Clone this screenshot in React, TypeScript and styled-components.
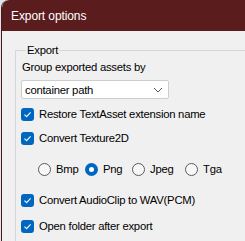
import styled, { createGlobalStyle } from "styled-components";
import { useState } from "react";

const Global = createGlobalStyle`
  html, body {
    margin: 0;
    padding: 0;
    background: #dfe3ea;
    overflow: hidden;
  }
  * { box-sizing: border-box; }
`;

const Window = styled.div`
  width: 244px;
  height: 241px;
  margin-left: 1px;
  border-left: 1px solid #4e1818;
  border-top-left-radius: 8px;
  background: #f0f0f0;
  font-family: "Liberation Sans", Arial, sans-serif;
  font-size: 11.3px;
  letter-spacing: -0.25px;
  color: #000;
  overflow: hidden;
`;

const TitleBar = styled.div`
  height: 31px;
  background: #5a1c1c;
  color: #fff;
  display: flex;
  align-items: center;
  padding-left: 9px;
  font-size: 12px;
  letter-spacing: -0.1px;
  border-top-left-radius: 7px;
`;

const Body = styled.div`
  padding: 12px 0 0 13px;
`;

const GroupBox = styled.fieldset`
  margin: 0;
  padding: 2px 0 0 5px;
  border: 1px solid #d6d6d6;
  border-right: none;
  border-bottom: none;
  min-width: 0;
  height: 220px;
`;

const Legend = styled.legend`
  padding: 0 1px;
  margin-left: 5px;
  line-height: 14px;
`;

const Label = styled.div`
  padding-left: 1px;
  line-height: 16px;
`;

const Select = styled.div`
  margin-top: 5px;
  width: 148px;
  height: 19px;
  background: #fff;
  border: 1px solid #cdcdcd;
  border-radius: 2px;
  display: flex;
  align-items: center;
  justify-content: space-between;
  padding: 0 5px 0 3px;
`;

const CheckRow = styled.label<{ $gap?: number }>`
  display: flex;
  align-items: center;
  gap: 5px;
  height: 14px;
  margin-top: ${(p) => p.$gap ?? 10}px;
`;

const Box = styled.span`
  width: 13px;
  height: 13px;
  border-radius: 3px;
  background: #0067c0;
  display: flex;
  align-items: center;
  justify-content: center;
  flex-shrink: 0;
`;

const RadioRow = styled.div`
  display: flex;
  align-items: center;
  height: 14px;
  margin-top: 17px;
  padding-left: 17px;
`;

const RadioItem = styled.label<{ $w: number }>`
  display: flex;
  align-items: center;
  gap: 5px;
  width: ${(p) => p.$w}px;
  flex-shrink: 0;
`;

const Circle = styled.span<{ $on?: boolean }>`
  width: 13px;
  height: 13px;
  border-radius: 50%;
  flex-shrink: 0;
  background: ${(p) => (p.$on ? "#fff" : "#f7f7f7")};
  border: ${(p) => (p.$on ? "4px solid #0067c0" : "1px solid #5a5a5a")};
`;

const Check = () => (
  <Box>
    <svg width="9" height="9" viewBox="0 0 9 9">
      <path d="M1.5 4.6 L3.6 6.6 L7.6 2.4" fill="none" stroke="#fff" strokeWidth="1.1" />
    </svg>
  </Box>
);

const formats = [
  { name: "Bmp", w: 47 },
  { name: "Png", w: 47 },
  { name: "Jpeg", w: 53 },
  { name: "Tga", w: 40 },
];

export default function App() {
  const [format, setFormat] = useState("Png");
  return (
    <Window>
      <Global />
      <TitleBar>Export options</TitleBar>
      <Body>
        <GroupBox>
          <Legend>Export</Legend>
          <Label>Group exported assets by</Label>
          <Select>
            <span>container path</span>
            <svg width="10" height="6" viewBox="0 0 10 6">
              <path d="M1 1 L5 5 L9 1" fill="none" stroke="#555" strokeWidth="1" />
            </svg>
          </Select>
          <CheckRow $gap={8}>
            <Check />
            Restore TextAsset extension name
          </CheckRow>
          <CheckRow>
            <Check />
            Convert Texture2D
          </CheckRow>
          <RadioRow>
            {formats.map((f) => (
              <RadioItem key={f.name} $w={f.w} onClick={() => setFormat(f.name)}>
                <Circle $on={format === f.name} />
                {f.name}
              </RadioItem>
            ))}
          </RadioRow>
          <CheckRow $gap={17}>
            <Check />
            Convert AudioClip to WAV(PCM)
          </CheckRow>
          <CheckRow $gap={12}>
            <Check />
            Open folder after export
          </CheckRow>
        </GroupBox>
      </Body>
    </Window>
  );
}
